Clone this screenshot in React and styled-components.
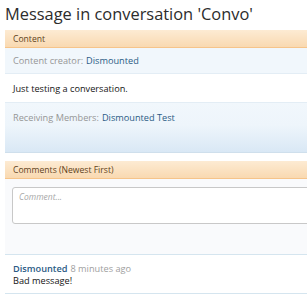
import React from "react";
import styled, { createGlobalStyle } from "styled-components";

const GlobalStyle = createGlobalStyle`
  html, body {
    margin: 0;
    padding: 0;
    background: #fff;
    overflow: hidden;
  }
  body {
    font-family: "Open Sans", "DejaVu Sans", sans-serif;
    color: #141414;
  }
`;

const Page = styled.div`
  width: 340px;
  padding: 0 0 0 5px;
`;

const Title = styled.h1`
  margin: 0;
  padding: 3px 0 0 0;
  height: 27px;
  font-size: 16.4px;
  font-weight: 400;
  color: #2c2c2c;
  line-height: 22px;
  white-space: nowrap;
`;

const SectionHeader = styled.div`
  height: 17px;
  padding-left: 8px;
  display: flex;
  align-items: center;
  font-size: 8.6px;
  color: #5e4220;
  background: linear-gradient(#fdebd3, #f9d9b1);
  border-bottom: 1px solid #f6c48a;
  margin-top: ${(p) => p.mt || 0}px;
`;

const InfoRow = styled.div`
  height: ${(p) => p.h}px;
  padding-left: 8px;
  display: flex;
  align-items: ${(p) => (p.tall ? "flex-start" : "center")};
  padding-top: ${(p) => (p.tall ? 8 : 0)}px;
  box-sizing: border-box;
  font-size: 9.2px;
  color: #969696;
  background: ${(p) =>
    p.tall
      ? "linear-gradient(#f1f7fc 0%, #eef5fb 45%, #d9e8f5 100%)"
      : "#f1f7fc"};
  border-bottom: 1px solid ${(p) => (p.tall ? "#cfdfec" : "#e3edf5")};
`;

const Link = styled.span`
  color: #2b5b85;
  margin-left: 3px;
`;

const Body = styled.div`
  height: 28px;
  padding-left: 8px;
  display: flex;
  align-items: center;
  font-size: 9.2px;
  color: #141414;
  border-bottom: 1px solid #e3edf5;
`;

const Composer = styled.div`
  padding: 8px 0 30px 7px;
  background: #f9fafc;
  border-bottom: 1px solid #d5e5ef;
`;

const CommentBox = styled.div`
  box-sizing: border-box;
  height: 37px;
  border: 1px solid #c8c8c8;
  border-radius: 3px;
  background: #fff;
  padding: 3px 6px;
  font-size: 8.5px;
  font-style: italic;
  color: #a8a8a8;
`;

const Comment = styled.div`
  padding: 8px 0 6px 8px;
  font-size: 9.2px;
  line-height: 12px;
  border-bottom: 1px solid #d5e5ef;
`;

const Author = styled.span`
  color: #2b5b85;
  font-weight: 600;
`;

const Time = styled.span`
  color: #a0a0a0;
  margin-left: 3px;
`;

export default function App() {
  return (
    <Page>
      <GlobalStyle />
      <Title>Message in conversation 'Convo'</Title>
      <SectionHeader>Content</SectionHeader>
      <InfoRow h={26}>
        Content creator:<Link>Dismounted</Link>
      </InfoRow>
      <Body>Just testing a conversation.</Body>
      <InfoRow h={50} tall>
        Receiving Members:<Link>Dismounted Test</Link>
      </InfoRow>
      <SectionHeader mt={8}>Comments (Newest First)</SectionHeader>
      <Composer>
        <CommentBox>Comment...</CommentBox>
      </Composer>
      <Comment>
        <Author>Dismounted</Author>
        <Time>8 minutes ago</Time>
        <div>Bad message!</div>
      </Comment>
    </Page>
  );
}
